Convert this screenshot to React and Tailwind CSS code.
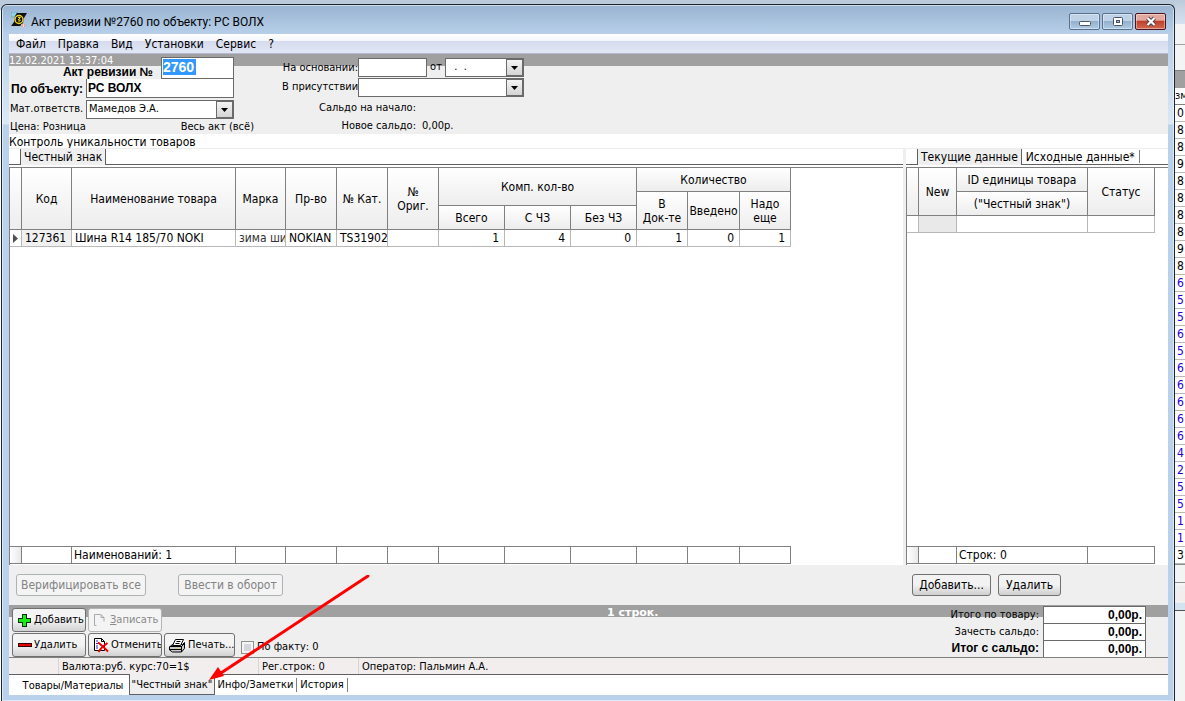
import { clsx } from 'clsx';

const menuItems = ['Файл', 'Правка', 'Вид', 'Установки', 'Сервис', '?'];

// Row numbers of the journal that stays open behind this window
const behindRows = [0, 8, 8, 9, 8, 8, 8, 8, 9, 8, 6, 5, 5, 6, 5, 6, 6, 6, 6, 6, 4, 2, 5, 5, 1, 1, 3];

const goodsCols = [
  'w-[12px]', 'w-[50px]', 'w-[164px]', 'w-[50px]', 'w-[51px]', 'w-[51px]', 'w-[51px]',
  'w-[66px]', 'w-[66px]', 'w-[66px]', 'w-[51px]', 'w-[52px]', 'w-[51px]',
];
const unitCols = ['w-[12px]', 'w-[38px]', 'w-[131px]', 'w-[67px]'];

const ui = "font-['DejaVu_Sans_Condensed','Noto_Sans',sans-serif]";
const bold = "font-['Liberation_Sans',sans-serif] font-bold";

function Cols({ widths }) {
  return (
    <colgroup>
      {widths.map((w, i) => (
        <col key={i} className={w} />
      ))}
    </colgroup>
  );
}

function Th({ children, ...props }) {
  return (
    <th
      {...props}
      className="border-r border-b border-[#808080] bg-linear-to-b from-white to-[#ededed] p-0 text-center font-normal leading-[14px]"
    >
      {children}
    </th>
  );
}

function Td({ children, className }) {
  return (
    <td className={clsx('overflow-hidden whitespace-nowrap border-r border-b border-[#b8b8b8] px-[3px] pt-px pb-0 leading-[15px]', className)}>
      {children}
    </td>
  );
}

function FootCell({ children, first }) {
  return (
    <td className={clsx('whitespace-nowrap border-y border-r border-[#808080] px-0.5 pt-px pb-0 leading-[15px]', first && 'bg-linear-to-r from-white to-[#e8e8e8]')}>
      {children}
    </td>
  );
}

function DropArrow() {
  return (
    <svg viewBox="0 0 7 4" className="h-1 w-[7px]" aria-hidden="true">
      <path d="M0 0h7L3.5 4z" fill="#000" />
    </svg>
  );
}

const dropBox = 'flex w-[17px] shrink-0 items-center justify-center border border-[#6a6a6a] bg-linear-to-b from-[#f4f4f4] to-[#d4d4d4]';

function Combo({ id, value, className }) {
  return (
    <div className={clsx('flex h-[19px] border border-[#6a6a6a] bg-white', className)}>
      <select id={id} className="min-w-0 flex-1 appearance-none px-0.5 outline-none">
        <option>{value}</option>
      </select>
      <span className={dropBox}>
        <DropArrow />
      </span>
    </div>
  );
}

function ToolButton({ icon, children, disabled, className }) {
  return (
    <button
      disabled={disabled}
      className={clsx(
        'flex h-6 items-center gap-0.5 overflow-hidden whitespace-nowrap rounded-[3px] border pl-1',
        disabled
          ? 'border-[#b4b4b4] bg-[#f4f4f4] text-[#8a8a8a]'
          : 'border-[#707070] bg-linear-to-b from-[#f4f4f4] from-50% to-[#d2d2d2]',
        className,
      )}
    >
      {icon}
      <span>{children}</span>
    </button>
  );
}

function PanelButton({ children, disabled, className }) {
  return (
    <button
      disabled={disabled}
      className={clsx(
        'h-[22px] whitespace-nowrap rounded-[3px] border text-[12px]',
        disabled
          ? 'border-[#adb2b5] bg-[#f4f4f4] text-[#838383]'
          : 'border-[#707070] bg-linear-to-b from-[#f2f2f2] from-50% to-[#cfcfcf]',
        className,
      )}
    >
      {children}
    </button>
  );
}

function AppIcon() {
  return (
    <svg viewBox="0 0 16 16" className="size-4" aria-hidden="true">
      <rect x="0" y="0" width="6" height="5" fill="#8fd0ea" stroke="#5a90b0" strokeWidth=".6" />
      <path d="M6 1h10l-3 5-1 5-3 3H0l3-4 1-6z" fill="#111" />
      <circle cx="8" cy="7.500" r="4" fill="none" stroke="#f2d81c" strokeWidth="1.400" />
      <path d="M7 5.500h2.500L7 8h2.500L7.500 10" fill="none" stroke="#f2d81c" />
      <path d="M10 12h5v3h-5z" fill="#e8d8d8" />
      <path d="M11 12v3M14 12v3" stroke="#b06a6a" strokeWidth=".7" />
    </svg>
  );
}

function PlusIcon() {
  return (
    <svg viewBox="0 0 15 15" className="size-[15px] shrink-0" aria-hidden="true">
      <path d="M5 1h5v4h4v5h-4v4H5v-4H1V5h4z" fill="#0e2a0e" />
      <path d="M6 2h3v4h4v3H9v4H6V9H2V6h4z" fill="#12f012" />
    </svg>
  );
}

function MinusIcon() {
  return (
    <svg viewBox="0 0 15 15" className="size-[15px] shrink-0" aria-hidden="true">
      <rect x="1.500" y="5.500" width="13" height="3" fill="#e80000" stroke="#300" />
    </svg>
  );
}

function PageIcon() {
  return (
    <svg viewBox="0 0 15 15" className="size-[15px] shrink-0" aria-hidden="true">
      <path d="M7.500 1.500h-6v11h2M8 1.500l3 3v4M8 1.500v3h3" fill="none" stroke="#a8a8a8" />
    </svg>
  );
}

function CancelIcon() {
  return (
    <svg viewBox="0 0 16 16" className="size-4 shrink-0" aria-hidden="true">
      <path d="M1.500 1.500h7l3 3v9h-10z" fill="#fff" stroke="#000" />
      <path d="M8.500 1.500v3h3" fill="none" stroke="#000" />
      <path d="M3 4h2M3 6.500h4M3 9h2M3 11h2" stroke="#2323c8" />
      <path d="M5 5.500c3 2 7 6 10 9M14.500 6c-3 2-7 5.500-9 9" fill="none" stroke="#f00000" strokeWidth="2" />
    </svg>
  );
}

function PrinterIcon() {
  return (
    <svg viewBox="0 0 17 15" className="h-[15px] w-[17px] shrink-0" aria-hidden="true">
      <path d="M3.500 6.500h10l2-2v6l-3 3.500h-9l-3-2v-3z" fill="#c8c8c8" stroke="#000" />
      <path d="M6.500 1.500h8l-3 6h-8z" fill="#fff" stroke="#000" />
      <path d="M7.500 3.500h4M6.500 5.500h4" stroke="#000" />
      <path d="M.5 8.500h12M1 11.500h11M12.500 8v6M12.500 8.500l3-3" stroke="#000" fill="none" />
      <path d="M8 10.500h2" stroke="#e8e020" />
    </svg>
  );
}

function TitleBar() {
  const frame = 'flex h-[17px] w-[31px] items-center justify-center rounded-[2px] border shadow-[inset_0_0_0_1px_#ffffff66]';
  const plain = 'border-[#56708f] bg-linear-to-b from-[#bfd2e6] from-45% via-[#93b0ce] via-50% to-[#afcae4]';
  return (
    <header className="flex h-[29px] items-center px-0.5">
      <AppIcon />
      <h1 className="mt-1 ml-1 flex-1 font-['Roboto',sans-serif] text-[12px] leading-4">Акт ревизии №2760 по объекту: РС ВОЛХ</h1>
      <div className="mt-1 flex gap-0.5">
        <button aria-label="Свернуть" className={clsx(frame, plain)}>
          <svg viewBox="0 0 12 11" className="h-[11px] w-3">
            <rect x=".5" y="5.500" width="11" height="4" rx="1" fill="#fff" stroke="#4a5363" />
          </svg>
        </button>
        <button aria-label="Развернуть" className={clsx(frame, plain)}>
          <svg viewBox="0 0 12 11" className="h-[11px] w-3">
            <rect x="1.500" y="1.500" width="9" height="8" rx="1" fill="#fff" stroke="#4a5363" />
            <rect x="4.500" y="4.500" width="3" height="2" fill="#9db5cf" stroke="#4a5363" />
          </svg>
        </button>
        <button aria-label="Закрыть" className={clsx(frame, 'border-[#4c1420] bg-linear-to-b from-[#e3a99f] from-40% via-[#c0402c] via-50% to-[#d0694f]')}>
          <svg viewBox="0 0 12 11" className="h-[11px] w-3">
            <path d="M2.500 2l7 7M9.500 2l-7 7" stroke="#4a4050" strokeWidth="4" />
            <path d="M2.500 2l7 7M9.500 2l-7 7" stroke="#fff" strokeWidth="2.200" />
          </svg>
        </button>
      </div>
    </header>
  );
}

function DocumentForm() {
  return (
    <section className="flex h-20 gap-12 bg-[linear-gradient(#a0a0a0_12px,#efefef_12px)]">
      <div className="flex w-[225px] flex-col">
        <div className="flex">
          <div className="flex w-[152px] flex-col">
            <time className="leading-[13px] text-white">12.02.2021 13:37:04</time>
            <label htmlFor="act" className={clsx(bold, 'pr-2 text-right text-[12px] leading-[11px]')}>Акт ревизии №</label>
          </div>
          <div className="mt-[3px] h-[22px] w-[73px] border border-[#6a6a6a] bg-white p-px">
            <input id="act" defaultValue="2760" className={clsx(bold, 'block h-4 w-[33px] bg-[#3399ff] text-[14px] text-white outline-none')} />
          </div>
        </div>
        <div className="flex items-center">
          <label htmlFor="object" className={clsx(bold, 'w-[77px] pl-0.5 text-[12px]')}>По объекту:</label>
          <input id="object" defaultValue="РС ВОЛХ" className={clsx(bold, 'h-[19px] w-[148px] border border-t-0 border-[#6a6a6a] bg-white px-px text-[12px]')} />
        </div>
        <div className="mt-0.5 flex items-center">
          <label htmlFor="person" className="w-[77px] whitespace-nowrap pl-px">Мат.ответств.</label>
          <Combo id="person" value="Мамедов Э.А." className="w-[148px]" />
        </div>
        <div className="flex justify-between pl-px leading-4">
          <span>Цена: Розница</span>
          <span className="mr-[-20px]">Весь акт (всё)</span>
        </div>
      </div>

      <div className="flex w-[242px] flex-col">
        <div className="mt-1 flex items-center">
          <label htmlFor="basis" className="w-[76px] whitespace-nowrap text-right leading-4">На основании:</label>
          <input id="basis" className="h-[19px] w-[69px] border border-[#6a6a6a] bg-white" />
          <label htmlFor="date" className="w-[18px] text-center">от</label>
          <div className="flex h-[19px] w-[79px] border border-[#6a6a6a] bg-white">
            <input id="date" defaultValue="  .  ." className="min-w-0 flex-1 pl-0.5 outline-none" />
            <button aria-label="Календарь" className={dropBox}>
              <DropArrow />
            </button>
          </div>
        </div>
        <div className="mt-px flex items-center">
          <label htmlFor="witness" className="w-[76px] whitespace-nowrap text-right">В присутствии:</label>
          <Combo id="witness" value="" className="flex-1" />
        </div>
        <dl className="mt-0.5 grid grid-cols-[134px_1fr] gap-x-1.5 leading-[18px]">
          <dt className="text-right">Сальдо на начало:</dt>
          <dd />
          <dt className="text-right">Новое сальдо:</dt>
          <dd>0,00р.</dd>
        </dl>
      </div>
    </section>
  );
}

function GoodsPanel() {
  const values = ['1', '4', '0', '1', '0', '1'];
  return (
    <div className="flex min-w-0 flex-1 flex-col">
      <div className="flex h-[17px] border-t border-[#ededed] text-[12px]">
        <span className="w-3 border-r border-b border-[#606060]" />
        <button className="bg-[#efefef] px-[3px] leading-4">Честный знак</button>
        <span className="flex-1 border-b border-l border-[#606060]" />
      </div>
      <div className="mt-0.5 flex flex-1 flex-col border-t border-l border-[#808080] pb-px">
        <table className="w-[781px] table-fixed border-separate border-spacing-0 text-[12px]">
          <Cols widths={goodsCols} />
          <thead>
            <tr className="h-6">
              <Th rowSpan={3} />
              <Th rowSpan={3}>Код</Th>
              <Th rowSpan={3}>Наименование товара</Th>
              <Th rowSpan={3}>Марка</Th>
              <Th rowSpan={3}>Пр-во</Th>
              <Th rowSpan={3}>№ Кат.</Th>
              <Th rowSpan={3}>№<br />Ориг.</Th>
              <Th rowSpan={2} colSpan={3}>Комп. кол-во</Th>
              <Th colSpan={3}>Количество</Th>
            </tr>
            <tr className="h-[14px]">
              <Th rowSpan={2}>В<br />Док-те</Th>
              <Th rowSpan={2}>Введено</Th>
              <Th rowSpan={2}>Надо<br />еще</Th>
            </tr>
            <tr className="h-6">
              <Th>Всего</Th>
              <Th>С ЧЗ</Th>
              <Th>Без ЧЗ</Th>
            </tr>
          </thead>
          <tbody>
            <tr className="h-[17px]">
              <Td>
                <svg viewBox="0 0 5 9" className="h-[9px] w-[5px]" aria-label="Текущая строка">
                  <path d="M0 0l5 4.500L0 9z" fill="#505050" />
                </svg>
              </Td>
              <Td className="bg-[#f0f0f0]">127361</Td>
              <Td>Шина R14 185/70 NOKI</Td>
              <Td className="text-[#333]">зима ши</Td>
              <Td>NOKIAN</Td>
              <Td>TS31902</Td>
              <Td />
              {values.map((v, i) => (
                <Td key={i} className="pr-[5px] text-right">{v}</Td>
              ))}
            </tr>
          </tbody>
        </table>
        <div className="flex-1" />
        <table className="w-[781px] table-fixed border-separate border-spacing-0 text-[12px]">
          <Cols widths={goodsCols} />
          <tbody>
            <tr className="h-[18px]">
              {goodsCols.map((_, i) => (
                <FootCell key={i} first={i === 0}>{i === 2 && 'Наименований: 1'}</FootCell>
              ))}
            </tr>
          </tbody>
        </table>
      </div>
    </div>
  );
}

function UnitsPanel() {
  return (
    <div className="flex w-[262px] shrink-0 flex-col">
      <div className="flex h-[17px] border-t border-[#ededed] text-[12px]">
        <span className="w-3 border-r border-b border-[#606060]" />
        <button className="whitespace-nowrap bg-[#efefef] px-[3px] leading-4">Текущие данные</button>
        <div className="flex flex-1 border-b border-l border-[#606060]">
          <button className="my-px whitespace-nowrap border-r border-[#808080] px-1 leading-[14px]">Исходные данные*</button>
        </div>
      </div>
      <div className="mt-0.5 flex flex-1 flex-col border-t border-l border-[#808080] pb-px">
        <table className="w-[248px] table-fixed border-separate border-spacing-0 text-[12px]">
          <Cols widths={unitCols} />
          <thead>
            <tr className="h-6">
              <Th rowSpan={2} />
              <Th rowSpan={2}>New</Th>
              <Th>ID единицы товара</Th>
              <Th rowSpan={2}>Статус</Th>
            </tr>
            <tr className="h-6">
              <Th>("Честный знак")</Th>
            </tr>
          </thead>
          <tbody>
            <tr className="h-[17px]">
              <Td />
              <Td className="bg-[#e9e9e9]" />
              <Td />
              <Td />
            </tr>
          </tbody>
        </table>
        <div className="flex-1" />
        <table className="w-[248px] table-fixed border-separate border-spacing-0 text-[12px]">
          <Cols widths={unitCols} />
          <tbody>
            <tr className="h-[18px]">
              {unitCols.map((_, i) => (
                <FootCell key={i} first={i === 0}>{i === 2 && 'Строк: 0'}</FootCell>
              ))}
            </tr>
          </tbody>
        </table>
      </div>
    </div>
  );
}

function Totals() {
  const box = 'h-[17px] border border-b-0 border-[#6a6a6a] bg-white pr-[3px] text-right text-[12px] leading-4';
  return (
    <dl className="mt-px mr-[22px] grid grid-cols-[92px_103px] content-start gap-x-1 leading-[17px]">
      <dt className="whitespace-nowrap text-right">Итого по товару:</dt>
      <dd className={clsx(bold, box)}>0,00р.</dd>
      <dt className="whitespace-nowrap text-right">Зачесть сальдо:</dt>
      <dd className={clsx(bold, box)}>0,00р.</dd>
      <dt className={clsx(bold, 'whitespace-nowrap text-right text-[12px]')}>Итог с сальдо:</dt>
      <dd className={clsx(bold, box)}>0,00р.</dd>
    </dl>
  );
}

function Toolbar() {
  return (
    <section className="flex h-[52px] bg-[linear-gradient(#a0a0a0_12px,#efefef_12px)]">
      <div className="flex flex-col gap-px pt-[3px] pl-[3px]">
        <div className="flex gap-0.5">
          <ToolButton icon={<PlusIcon />} className="w-[74px]"><u>Д</u>обавить</ToolButton>
          <ToolButton icon={<PageIcon />} disabled className="w-[74px]"><u>З</u>аписать</ToolButton>
        </div>
        <div className="flex gap-0.5">
          <ToolButton icon={<MinusIcon />} className="w-[74px]">Удалить</ToolButton>
          <ToolButton icon={<CancelIcon />} className="w-[74px]">Отменить</ToolButton>
          <ToolButton icon={<PrinterIcon />} className="w-[71px]">Печать...</ToolButton>
          <label className="mt-1 ml-1 flex items-center gap-[3px] whitespace-nowrap">
            <input type="checkbox" className="size-[13px] appearance-none border border-[#8e8f8f] bg-[#d4d8de] shadow-[inset_0_0_0_2px_#f4f4f4]" />
            По факту: 0
          </label>
        </div>
      </div>
      <p className="flex-1 text-center font-['DejaVu_Sans',sans-serif] text-[11px] font-bold leading-[15px] text-white">1 строк.</p>
      <Totals />
    </section>
  );
}

function BehindWindow() {
  return (
    <aside className="w-2.5 shrink-0 overflow-hidden bg-[#f4f4f4] text-[12px]">
      <div className="h-6 bg-linear-to-b from-[#bccbdb] to-[#d6e2ef]" />
      <div className="h-[21px] border-b border-[#a0a0a0]" />
      <div className="h-[26px] border-b border-[#808080]" />
      <div className="h-[17px] bg-[#a0a0a0]" />
      <div className="h-[17px] border-b border-[#808080] bg-white text-[11px] leading-4">зм</div>
      {behindRows.map((n, i) => (
        <div
          key={i}
          className={clsx('h-[17px] border-b border-[#b8b8b8] bg-white pl-0.5 leading-[17px]', i >= 10 && i < 26 && 'text-[#2200d8]')}
        >
          {n}
        </div>
      ))}
      <div className="h-[19px] border-y border-[#909090]" />
      <div className="mt-[3px] h-[17px] bg-[#f2eeee]" />
      <div className="h-2 border-b border-[#555] bg-[#d5e2f0]" />
    </aside>
  );
}

export default function App() {
  const tab = 'whitespace-nowrap leading-[22px]';
  return (
    <div className={clsx(ui, 'flex min-h-screen bg-white text-[11px] text-black')}>
      <div className="flex min-w-0 flex-1 flex-col bg-[linear-gradient(#bccbdb_10px,#fff_10px)] pt-1 pl-px">
        <main className="relative flex flex-1 flex-col rounded-t-md border border-b-0 border-[#1c2530] bg-[linear-gradient(#99b4d1,#b7cfe9_29px,#dbe8f5_119px,#b9d1ea_120px)] pr-1.5 pb-1.5 pl-[7px] shadow-[inset_0_0_0_1px_#ffffff88]">
          <TitleBar />

          <nav className="flex h-5 items-center gap-3 border-b border-[#b4b8d0] bg-[linear-gradient(#fff,#f4f6fb_7px,#d5dbee_7px,#e2e7f6)] pl-[7px] text-[12px]">
            {menuItems.map((item) => (
              <button key={item}>{item}</button>
            ))}
          </nav>

          <DocumentForm />

          <h2 className="h-[14px] bg-white text-[12px] leading-4">Контроль уникальности товаров</h2>
          <div className="flex flex-1 bg-white">
            <GoodsPanel />
            <div className="w-[3px] bg-[#efefef]" />
            <UnitsPanel />
          </div>

          <section className="flex h-10 items-center bg-[#efefef] pl-[7px]">
            <PanelButton disabled className="w-[130px]">Верифицировать все</PanelButton>
            <PanelButton disabled className="ml-8 w-[105px]">Ввести в оборот</PanelButton>
            <div className="mr-[107px] ml-auto flex gap-[7px]">
              <PanelButton className="w-[79px]">Добавить...</PanelButton>
              <PanelButton className="w-[63px]">Удалить</PanelButton>
            </div>
          </section>

          <Toolbar />

          <footer className="flex h-[17px] border-t border-[#808080] bg-[#f2eeee] leading-[17px]">
            <span className="w-[50px] border-r border-[#d8d4d4]" />
            <span className="w-[200px] border-r border-[#d8d4d4] pl-[3px]">Валюта:руб. курс:70=1$</span>
            <span className="w-[100px] border-r border-[#d8d4d4] pl-[3px]">Рег.строк: 0</span>
            <span className="pl-[3px]">Оператор: Пальмин А.А.</span>
          </footer>

          <nav className="flex h-[21px] bg-white">
            <div className="w-[120px] border-t border-[#606060] text-center">
              <button className={clsx(tab, 'pl-2')}>Товары/Материалы</button>
            </div>
            <button className={clsx(tab, 'w-[86px] border-x border-b border-[#606060] bg-[#efefef]')}>"Честный знак"</button>
            <div className="flex flex-1 items-center border-t border-[#606060]">
              <button className="w-[82px] whitespace-nowrap border-r border-[#808080] leading-[14px]">Инфо/Заметки</button>
              <button className="w-[51px] whitespace-nowrap border-r border-[#808080] leading-[14px]">История</button>
            </div>
          </nav>

          {/* Pointer to the "Честный знак" tab */}
          <svg viewBox="0 0 164 110" className="pointer-events-none absolute bottom-4 left-[205px] h-[110px] w-[164px]" aria-hidden="true">
            <path d="M161 1L14 98" stroke="#f00" strokeWidth="3" strokeLinecap="round" />
            <path d="M2 105L11 92l6 9z" fill="#f00" />
          </svg>
        </main>
      </div>
      <BehindWindow />
    </div>
  );
}
